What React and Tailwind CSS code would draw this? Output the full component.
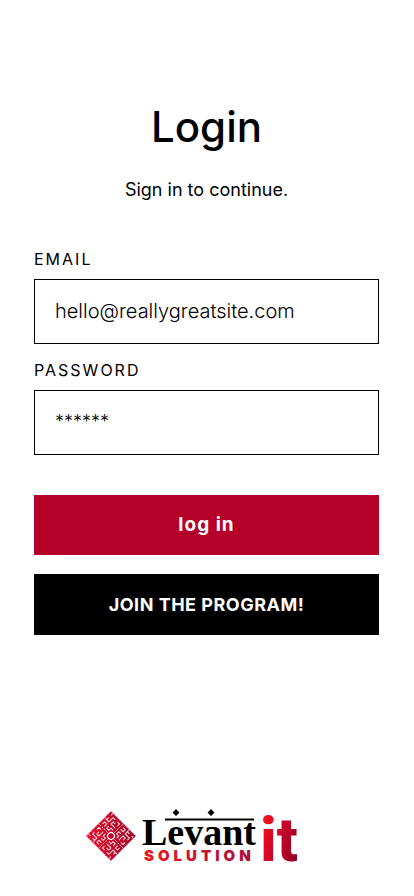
function Field({ id, label, type, autoComplete, defaultValue, textSize }) {
  return (
    <div className="flex flex-col gap-2">
      <label htmlFor={id} className="text-base leading-6 tracking-[2px]">
        {label}
      </label>
      <input
        id={id}
        type={type}
        autoComplete={autoComplete}
        defaultValue={defaultValue}
        className={`h-[65px] w-full rounded-none border border-black bg-white px-5 pb-[2px] font-light outline-none ${textSize}`}
      />
    </div>
  );
}

function KuficQuarter() {
  return (
    <path
      d="M2.500 0V3M2.500 5.500H5.500V2.500H8.500V5.500M11.500 2V5.500H14.500V2.500M2.500 8.500H8.500V11.500H5.500M2.500 11.500V14.500H5.500M8.500 14.500H11.500V8.500H14.500V11.500M14.500 14.500V17M11.500 8.500H17"
      fill="none"
      stroke="#ffe9ec"
      strokeWidth="1"
    />
  );
}

function Logo() {
  return (
    <svg viewBox="0 -8 216 80" className="h-20 w-[216px]" role="img" aria-label="Levant Solution it">
      <defs>
        <linearGradient id="mark" x1="0" y1="0" x2="1" y2="0">
          <stop offset="0" stopColor="#ee0a2c" />
          <stop offset="1" stopColor="#9c0628" />
        </linearGradient>
        <linearGradient id="word" x1="0" y1="0" x2="1" y2="0">
          <stop offset="0" stopColor="#f01422" />
          <stop offset="1" stopColor="#a80d3a" />
        </linearGradient>
        <linearGradient id="it" x1="0" y1="0.2" x2="1" y2="0.8">
          <stop offset="0" stopColor="#fb1515" />
          <stop offset="0.5" stopColor="#c8062c" />
          <stop offset="1" stopColor="#8f0020" />
        </linearGradient>
      </defs>
      <path d="M25 1 50 26 25 51 0 26Z" fill="url(#mark)" />
      <g transform="translate(25 26) rotate(45)">
        <KuficQuarter />
        <g transform="rotate(90)"><KuficQuarter /></g>
        <g transform="rotate(180)"><KuficQuarter /></g>
        <g transform="rotate(270)"><KuficQuarter /></g>
        <path d="M-17.600 0H17.600M0-17.600V17.600" stroke="#fff" strokeWidth="0.8" strokeDasharray="1.5 1" />
        <rect x="-17.400" y="-17.400" width="34.800" height="34.800" fill="none" stroke="#fff" strokeWidth="0.8" strokeDasharray="1 1.500" />
        <circle r="3.400" fill="#c40b2d" stroke="#fff" strokeWidth="1.200" />
      </g>
      <text x="56" y="35" fontSize="38" fontWeight="700" className="font-['Liberation_Serif',serif]">
        Levant
      </text>
      <path d="M79 9.500H168" stroke="#000" strokeWidth="1.800" />
      <path d="M90-1 93.500 2.500 90 6 86.500 2.500ZM125-1 128.500 2.500 125 6 121.500 2.500Z" />
      <text x="58" y="51" fontSize="15" fontWeight="900" letterSpacing="4" fill="url(#word)" className="font-[Inter,sans-serif]">
        SOLUTION
      </text>
      <text x="174" y="51" fontSize="62" fontWeight="800" fill="url(#it)" className="font-[Roboto,sans-serif]">
        it
      </text>
    </svg>
  );
}

export default function App() {
  return (
    <main className="flex min-h-screen flex-col items-center bg-white pt-[100px] pr-[35px] pb-[14px] pl-[34px] font-[Inter,sans-serif] text-black">
      <h1 className="text-[42px] leading-[54px] font-medium">Login</h1>
      <p className="mt-5 text-lg leading-8">Sign in to continue.</p>
      <form className="mt-[41px] flex w-full flex-col" onSubmit={(event) => event.preventDefault()}>
        <div className="flex flex-col gap-[14px]">
          <Field id="email" label="EMAIL" type="email" autoComplete="email" defaultValue="hello@reallygreatsite.com" textSize="text-[20px]" />
          <Field id="password" label="PASSWORD" type="text" autoComplete="off" defaultValue="******" textSize="text-[18px]" />
        </div>
        <div className="mt-10 flex flex-col gap-[19px]">
          <button type="submit" className="h-[60px] bg-[#b50029] text-[19px] font-bold tracking-[1px] text-white">
            log in
          </button>
          <button type="button" className="h-[61px] bg-black text-lg font-bold tracking-[0.5px] text-white">
            JOIN THE PROGRAM!
          </button>
        </div>
      </form>
      <footer className="mt-auto flex w-full justify-center pr-[25px]">
        <Logo />
      </footer>
    </main>
  );
}
